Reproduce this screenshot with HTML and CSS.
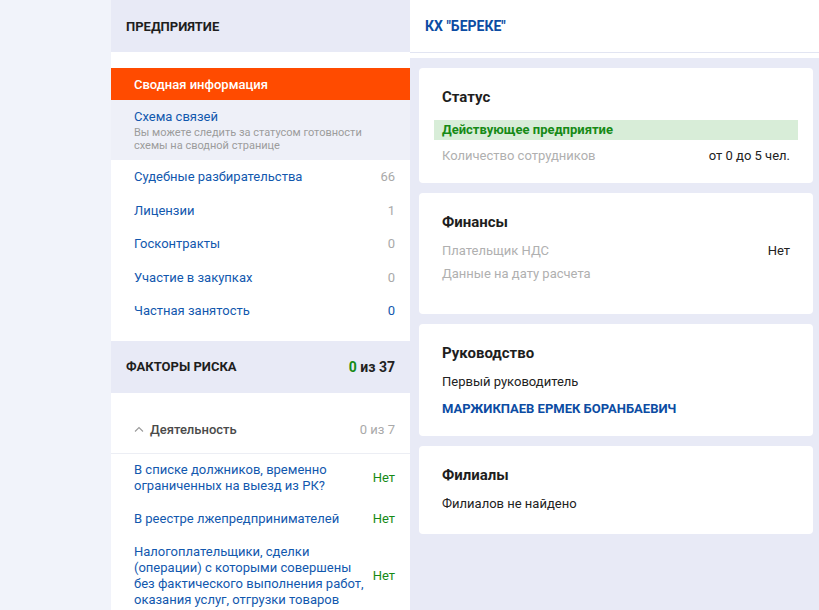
FILE: index.html
```html
<!DOCTYPE html>
<html lang="ru">
<head>
  <meta charset="UTF-8" />
  <title>КХ "БЕРЕКЕ" — Сводная информация</title>
  <link rel="stylesheet" href="styles.css">
</head>
<body>

  <div class="page">
    <div class="gutter"></div>

    <!-- Left menu -->
    <aside class="sidebar">
      <div class="side-head">
        <span class="side-title">Предприятие</span>
      </div>

      <ul class="menu">
        <li class="menu-item active">Сводная информация</li>
        <li class="menu-item scheme">
          <span class="link">Схема связей</span>
          <span class="hint">Вы можете следить за статусом готовности схемы на сводной странице</span>
        </li>
        <li class="menu-item"><span class="link">Судебные разбирательства</span><span class="count">66</span></li>
        <li class="menu-item"><span class="link">Лицензии</span><span class="count">1</span></li>
        <li class="menu-item"><span class="link">Госконтракты</span><span class="count">0</span></li>
        <li class="menu-item"><span class="link">Участие в закупках</span><span class="count">0</span></li>
        <li class="menu-item"><span class="link">Частная занятость</span><span class="count blue">0</span></li>
      </ul>

      <div class="side-head">
        <span class="side-title">Факторы риска</span>
        <span class="risk-total"><span class="green">0</span> из 37</span>
      </div>

      <div class="risk-group">
        <div class="group-row">
          <svg class="chevron" width="10" height="6" viewBox="0 0 10 6">
            <path d="M1 5.5 L5 1.5 L9 5.5" fill="none" stroke="#9a9a9a" stroke-width="1.1"/>
          </svg>
          <span class="group-name">Деятельность</span>
          <span class="group-count">0 из 7</span>
        </div>

        <div class="risk-item">
          <span class="link">В списке должников, временно ограниченных на выезд из РК?</span>
          <span class="answer">Нет</span>
        </div>
        <div class="risk-item">
          <span class="link">В реестре лжепредпринимателей</span>
          <span class="answer">Нет</span>
        </div>
        <div class="risk-item">
          <span class="link">Налогоплательщики, сделки (операции) с которыми совершены без фактического выполнения работ, оказания услуг, отгрузки товаров</span>
          <span class="answer">Нет</span>
        </div>
      </div>
    </aside>

    <!-- Main content -->
    <main class="main">
      <div class="main-top">
        <div class="company">КХ "БЕРЕКЕ"</div>
      </div>

      <div class="cards">
        <section class="card">
          <h3 class="card-title">Статус</h3>
          <div class="status">Действующее предприятие</div>
          <div class="row after-status">
            <span class="label">Количество сотрудников</span>
            <span class="value">от 0 до 5 чел.</span>
          </div>
        </section>

        <section class="card finance">
          <h3 class="card-title">Финансы</h3>
          <div class="row">
            <span class="label">Плательщик НДС</span>
            <span class="value">Нет</span>
          </div>
          <div class="row">
            <span class="label">Данные на дату расчета</span>
          </div>
        </section>

        <section class="card">
          <h3 class="card-title">Руководство</h3>
          <div class="row">
            <span class="value">Первый руководитель</span>
          </div>
          <div class="row person">МАРЖИКПАЕВ ЕРМЕК БОРАНБАЕВИЧ</div>
        </section>

        <section class="card branches">
          <h3 class="card-title">Филиалы</h3>
          <div class="row">
            <span class="value">Филиалов не найдено</span>
          </div>
        </section>
      </div>
    </main>
  </div>

</body>
</html>
```

FILE: styles.css
```css
:root {
  --page-bg: #f1f3fa;
  --panel-bg: #e8eaf6;
  --soft-bg: #eef0f8;
  --blue: #1258ae;
  --dark-blue: #0c4ca3;
  --orange: #ff4b00;
  --green: #168a16;
  --gray: #a9a9a9;
  --text: #222;
}

body {
  margin: 0;
  padding: 0;
  font-family: Roboto, "Liberation Sans", Arial, sans-serif;
  font-size: 13px;
  color: var(--text);
  background-color: var(--page-bg);
  height: 610px;
  overflow: hidden;
}

.page {
  display: flex;
  height: 610px;
}

.gutter {
  width: 111px;
  flex-shrink: 0;
}

/* sidebar */

.sidebar {
  width: 299px;
  flex-shrink: 0;
  background-color: #fff;
}

.side-head {
  height: 52px;
  background-color: var(--panel-bg);
  display: flex;
  align-items: center;
  justify-content: space-between;
  padding: 0 15px;
}

.side-title {
  font-size: 13px;
  font-weight: bold;
  text-transform: uppercase;
  color: #1e1e1e;
}

.risk-total {
  font-size: 14px;
  font-weight: bold;
  color: #222;
}

.green {
  color: var(--green);
}

.menu {
  list-style: none;
  margin: 0;
  padding: 16px 0 13px;
}

.menu-item {
  height: 33.5px;
  display: flex;
  align-items: center;
  justify-content: space-between;
  padding: 0 15px 0 23px;
}

.menu-item.active {
  height: 32px;
  background-color: var(--orange);
  color: #fff;
  font-weight: 500;
}

.menu-item.scheme {
  height: 60px;
  background-color: var(--soft-bg);
  flex-direction: column;
  align-items: flex-start;
  justify-content: center;
}

.link {
  color: var(--blue);
}

.hint {
  font-size: 11px;
  line-height: 13px;
  color: #9c9c9c;
  margin-top: 2px;
  padding-right: 20px;
}

.count {
  color: var(--gray);
}

.count.blue {
  color: var(--blue);
}

.risk-group {
  padding-top: 14px;
}

.group-row {
  height: 46px;
  display: flex;
  align-items: center;
  padding: 0 15px 0 23px;
  border-bottom: 1px solid #eceef4;
}

.chevron {
  margin-right: 6px;
  margin-top: -2px;
}

.group-name {
  font-weight: 500;
  color: #4a4a4a;
  flex: 1;
}

.group-count {
  color: var(--gray);
}

.risk-item {
  display: flex;
  align-items: center;
  justify-content: space-between;
  padding: 8.5px 15px 8.5px 23px;
  line-height: 16px;
}

.risk-item .link {
  width: 232px;
}

.answer {
  color: var(--green);
}

/* main */

.main {
  flex: 1;
  background-color: var(--panel-bg);
}

.main-top {
  background-color: #fff;
  padding-bottom: 5px;
}

.company {
  height: 52px;
  line-height: 52px;
  padding-left: 15px;
  font-size: 14px;
  font-weight: bold;
  color: var(--dark-blue);
  border-bottom: 1px solid #e2e5f2;
}

.cards {
  padding: 10px 6px 0 9px;
}

.card {
  background-color: #fff;
  border-radius: 4px;
  padding: 19px 15px 17px;
  margin-bottom: 10px;
}

.card.finance {
  padding-bottom: 30px;
}

.card.branches {
  padding-bottom: 20px;
}

.card-title {
  margin: 0 0 9px;
  padding: 0 8px;
  font-size: 15px;
  line-height: 20px;
  font-weight: bold;
  color: #1e1e1e;
}

.status {
  margin-top: 13px;
  height: 20px;
  line-height: 20px;
  padding: 0 8px;
  background-color: #d8edd8;
  color: var(--green);
  font-weight: bold;
}

.row {
  display: flex;
  justify-content: space-between;
  line-height: 20px;
  padding: 0 8px;
  margin-top: 3px;
}

.row.after-status {
  margin-top: 6px;
}

.row.person {
  margin-top: 7px;
  font-weight: bold;
  color: var(--dark-blue);
}

.label {
  color: #b0b0b0;
}

.value {
  color: #222;
}
```
